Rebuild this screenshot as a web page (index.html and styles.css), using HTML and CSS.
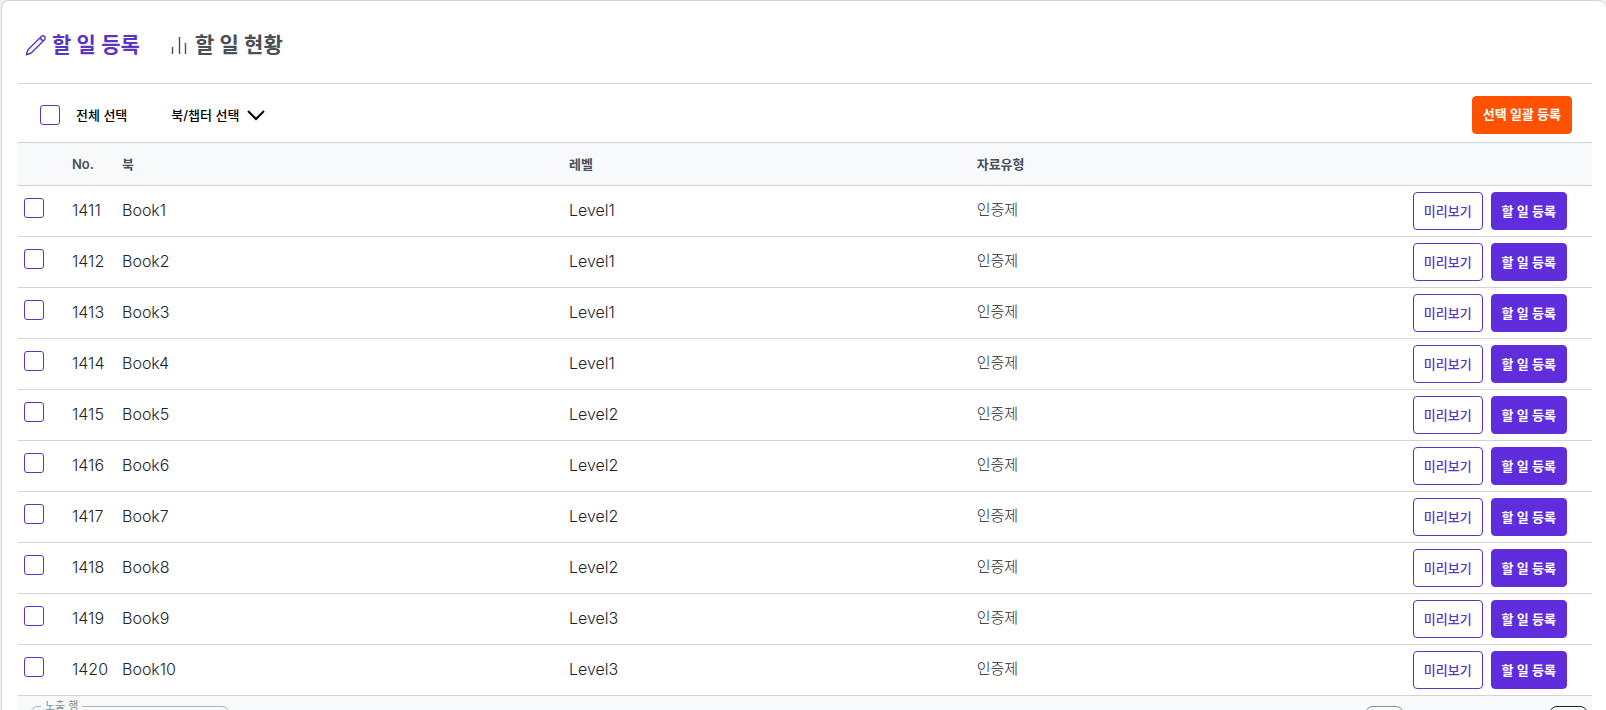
FILE: index.html
```html
<!DOCTYPE html>
<html lang="ko">
<head>
    <meta charset="UTF-8">
    <meta name="viewport" content="width=device-width, initial-scale=1.0">
    <title>할 일 등록</title>
    <link rel="stylesheet" href="styles.css">
</head>
<body>
    <main class="card">
        <nav class="tabs">
            <a href="#register" class="tab active">
                <svg class="tab-icon" viewBox="0 0 24 24" aria-hidden="true">
                    <path d="M2.3 21.8 4 16.8 17.6 3.2a2.3 2.3 0 0 1 3.2 3.2L7.2 20 2.3 21.8ZM16.4 4.4c.2 1.8 1.4 3 3.2 3.2"/>
                </svg>
                할 일 등록
            </a>
            <a href="#status" class="tab">
                <svg class="tab-icon" viewBox="0 0 24 24" aria-hidden="true">
                    <path d="M5.5 14v7M12.5 4v17M18.5 10v11"/>
                </svg>
                할 일 현황
            </a>
        </nav>

        <div class="toolbar">
            <label class="check-all"><input type="checkbox" id="check-all" class="check">전체 선택</label>
            <button type="button" class="filter">
                북/챕터 선택
                <svg class="chevron" viewBox="0 0 18 12" aria-hidden="true"><path d="m1 2 8 8 8-8"/></svg>
            </button>
            <button type="button" class="btn btn-bulk">선택 일괄 등록</button>
        </div>

        <table class="book-table">
            <thead>
                <tr>
                    <th class="col-check"></th>
                    <th class="col-no">No.</th>
                    <th class="col-book">북</th>
                    <th class="col-level">레벨</th>
                    <th class="col-type">자료유형</th>
                    <th class="col-actions"></th>
                </tr>
            </thead>
            <tbody id="book-rows"></tbody>
        </table>

        <div class="pager">
            <fieldset class="page-size">
                <legend>노출 행</legend>
                <select aria-label="노출 행">
                    <option>10</option>
                </select>
            </fieldset>
            <div class="page-buttons">
                <button type="button" class="page-btn" aria-label="이전"></button>
                <button type="button" class="page-btn next" aria-label="다음"></button>
            </div>
        </div>
    </main>

    <script>
        const levels = [1, 1, 1, 1, 2, 2, 2, 2, 3, 3];
        const rows = document.getElementById('book-rows');

        levels.forEach((level, i) => {
            const row = document.createElement('tr');
            row.innerHTML = `<td><input type="checkbox" class="check" aria-label="Book${i + 1}"></td>
                             <td>${1411 + i}</td>
                             <td>Book${i + 1}</td>
                             <td>Level${level}</td>
                             <td class="type">인증제</td>
                             <td>
                                 <div class="actions">
                                     <button type="button" class="btn btn-preview">미리보기</button>
                                     <button type="button" class="btn btn-register">할 일 등록</button>
                                 </div>
                             </td>`;
            rows.appendChild(row);
        });

        document.getElementById('check-all').addEventListener('change', e => {
            rows.querySelectorAll('.check').forEach(box => box.checked = e.target.checked);
        });
    </script>
</body>
</html>
```
FILE: styles.css
```css
* {
    box-sizing: border-box;
}
html {
    height: 100%;
    overflow: hidden;
}
body {
    height: 100%;
    margin: 0;
    overflow: hidden;
    background: #f0f0f0;
    color: #212529;
    font-family: Inter, "Noto Sans CJK KR", sans-serif;
    font-size: 16px;
    line-height: 24px;
}
button, select {
    font-family: inherit;
}
.card {
    margin-left: 1px;
    padding: 0 14px 0 16px;
    background: #fff;
    border: 1px solid #d4d4d4;
    border-right: none;
    border-radius: 8px 8px 0 0;
}
.tabs {
    display: flex;
    gap: 27px;
    height: 83px;
    padding: 6px 8px 0 6px;
    align-items: center;
    border-bottom: 1px solid #ced4da;
}
.tab {
    display: flex;
    align-items: center;
    gap: 4px;
    color: #495057;
    font-size: 21px;
    font-weight: 600;
    text-decoration: none;
}
.tab.active {
    color: #5a35c4;
}
.tab-icon {
    width: 24px;
    height: 24px;
    fill: none;
    stroke: currentColor;
    stroke-width: 1.4;
    stroke-linejoin: round;
}
.toolbar {
    display: flex;
    align-items: center;
    height: 58px;
    padding: 3px 20px 0 22px;
    color: #000;
    font-size: 13px;
    font-weight: 500;
}
.check {
    appearance: none;
    display: block;
    flex: none;
    width: 20px;
    height: 20px;
    margin: 0;
    border: 1px solid #5a35c4;
    border-radius: 3px;
    background: #fff;
}
.check:checked {
    background: #5f2ddb;
}
.check-all {
    display: flex;
    align-items: center;
    gap: 16px;
}
.filter {
    display: flex;
    align-items: center;
    gap: 8px;
    margin-left: 44px;
    padding: 0;
    border: none;
    background: none;
    color: #000;
    font-size: 13px;
    font-weight: 500;
}
.chevron {
    width: 18px;
    height: 12px;
    fill: none;
    stroke: currentColor;
    stroke-width: 2;
}
.btn {
    height: 38px;
    padding: 0 10px 2px;
    border: 1px solid #5f2ddb;
    border-radius: 4px;
    font-size: 13px;
    font-weight: 600;
    white-space: nowrap;
    cursor: pointer;
}
.btn-bulk {
    margin-left: auto;
    border-color: #ff5200;
    background: #ff5200;
    color: #fff;
}
.btn-preview {
    border-color: #5a35c4;
    background: #fff;
    color: #5a35c4;
    font-weight: 500;
}
.btn-register {
    background: #5f2ddb;
    color: #fff;
}
.book-table {
    width: 100%;
    table-layout: fixed;
    border-collapse: separate;
    border-spacing: 0;
    border-top: 1px solid #ced4da;
}
.book-table th {
    height: 43px;
    padding: 0;
    border-bottom: 1px solid #ced4da;
    background: #f8f9fb;
    color: #495057;
    font-size: 13px;
    font-weight: 600;
    text-align: left;
}
.book-table td {
    height: 51px;
    padding: 0 0 2px;
    border-bottom: 1px solid #ced4da;
    font-weight: 300;
}
.book-table td:last-child {
    padding: 0;
}
.book-table .type {
    font-size: 15px;
}
.book-table td .check {
    margin: 0 0 4px 6px;
}
.col-check {
    width: 54px;
}
.col-no {
    width: 50px;
}
.col-book {
    width: 28.4%;
}
.col-level {
    width: 25.9%;
}
.actions {
    display: flex;
    justify-content: flex-end;
    gap: 8px;
    padding-right: 25px;
}
.pager {
    display: flex;
    justify-content: space-between;
    padding: 3px 4px 12px 12px;
    background: #f8f9fb;
}
.page-size {
    width: 200px;
    margin: 0;
    padding: 0 10px 8px;
    border: 1px solid #adb5bd;
    border-radius: 8px;
}
.page-size legend {
    padding: 0 4px;
    color: #868e96;
    font-size: 11px;
    line-height: 14px;
}
.page-size select {
    width: 100%;
    border: none;
    background: none;
    font-size: 14px;
}
.page-buttons {
    display: flex;
    gap: 145px;
    padding-top: 7px;
}
.page-btn {
    width: 39px;
    height: 38px;
    border: 1px solid #868e96;
    border-radius: 8px;
    background: none;
}
.page-btn.next {
    border-color: #212529;
}
```
